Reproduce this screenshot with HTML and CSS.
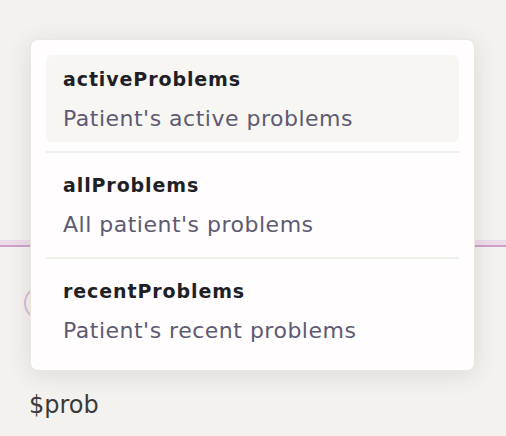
FILE: index.html
```html
<!DOCTYPE html>
<html lang="en">
<head>
    <meta charset="UTF-8">
    <meta name="viewport" content="width=device-width, initial-scale=1.0">
    <title>Variable suggestions</title>
    <link rel="stylesheet" href="styles.css">
</head>
<body>

    <div class="editor">
        <!-- toolbar strip behind the popup -->
        <div class="tabs"></div>

        <div class="row">
            <span class="avatar"></span>
        </div>

        <div class="input-line">$prob</div>

        <!-- Suggestions popup -->
        <ul class="suggest">
            <li class="suggest-item selected">
                <div class="suggest-name">activeProblems</div>
                <div class="suggest-desc">Patient's active problems</div>
            </li>
            <li class="suggest-item">
                <div class="suggest-name">allProblems</div>
                <div class="suggest-desc">All patient's problems</div>
            </li>
            <li class="suggest-item">
                <div class="suggest-name">recentProblems</div>
                <div class="suggest-desc">Patient's recent problems</div>
            </li>
        </ul>
    </div>

</body>
</html>
```

FILE: styles.css
```css
body {
    margin: 0;
    background: #f3f2ef;
    font-family: "DejaVu Sans", Verdana, sans-serif;
}
.editor {
    position: relative;
    height: 436px;
    overflow: hidden;
}
.tabs {
    height: 245px;
    border-bottom: 2px solid #cfa0cc;
    box-shadow: inset 0 -5px 0 #ecdde8;
}
.row {
    padding: 39px 0 0 24px;
    height: 34px;
}
.avatar {
    display: block;
    width: 34px;
    height: 34px;
    border-radius: 50%;
    border: 2px solid #dcbad8;
    box-sizing: border-box;
}
.input-line {
    margin: 70px 0 0 29px;
    font-size: 24px;
    line-height: 30px;
    color: #3a3a3a;
}
.suggest {
    position: absolute;
    left: 30px;
    top: 39px;
    width: 445px;
    box-sizing: border-box;
    margin: 0;
    padding: 15px 15px 16px;
    list-style: none;
    background: #fffdfd;
    border: 1px solid #ece6de;
    border-radius: 8px;
    box-shadow: 0 4px 24px rgba(60, 50, 40, 0.12);
}
.suggest-item {
    padding: 10px 17px 9px;
    border-radius: 6px;
}
.suggest-item + .suggest-item {
    margin-top: 19px;
    position: relative;
}
.suggest-item + .suggest-item::before {
    content: "";
    position: absolute;
    left: 0;
    right: 0;
    top: -10px;
    border-top: 2px solid #f0eee9;
}
.selected {
    background: #f7f6f2;
}
.suggest-name {
    font-size: 19px;
    line-height: 28px;
    font-weight: 700;
    letter-spacing: 0.9px;
    color: #211f26;
}
.suggest-desc {
    margin-top: 12px;
    font-size: 22px;
    line-height: 28px;
    letter-spacing: 0.5px;
    color: #5d5a72;
}
```
